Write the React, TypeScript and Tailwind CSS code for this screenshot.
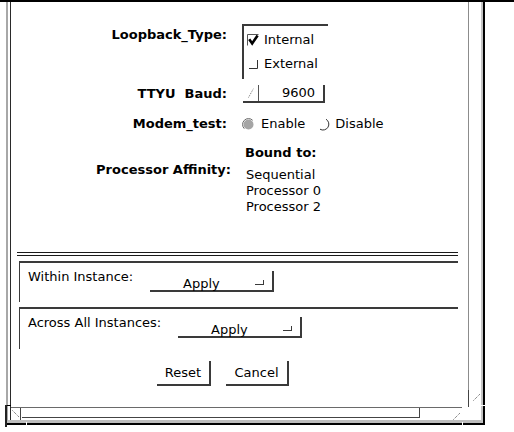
import React from "react";

// Motif style shadow colour
const line = "border-[#3a3a3a]";

function CheckOn() {
  return (
    <svg width="12" height="12" viewBox="0 0 12 12">
      <path d="M0.5 11.5V0.5H11.5" fill="none" stroke="#555" />
      <path d="M2.2 5.2l3 4.2 5.4-8" fill="none" stroke="#000" strokeWidth="2.6" />
    </svg>
  );
}

function CheckOff() {
  return (
    <svg width="12" height="12" viewBox="0 0 12 12">
      <path d="M2 10.5H10.5V2" fill="none" stroke="#333" />
    </svg>
  );
}

function RadioOn() {
  return (
    <svg width="13" height="13" viewBox="0 0 13 13">
      <circle cx="6.5" cy="6.5" r="5" fill="#a5a5a5" />
      <path d="M2.3 10.7A5.9 5.9 0 0 1 10.7 2.3" fill="none" stroke="#6a6a6a" />
    </svg>
  );
}

function RadioOff() {
  return (
    <svg width="13" height="13" viewBox="0 0 13 13">
      <path d="M8 1.2A5.5 5.5 0 0 1 2 11.2" fill="none" stroke="#333" />
    </svg>
  );
}

function Dots({ flip }: { flip?: boolean }) {
  // little dotted diagonal used by the scroll/resize corners
  return (
    <svg width="8" height="8" viewBox="0 0 8 8">
      <path
        d={flip ? "M0.5 0.5L7.5 7.5" : "M0.5 7.5L7.5 0.5"}
        stroke="#555"
        strokeDasharray="1 1"
        fill="none"
      />
    </svg>
  );
}

export default function App() {
  return (
    <div className="relative w-[514px] h-[432px] overflow-hidden bg-white border-t-2 border-black font-['DejaVu_Sans',sans-serif] text-[13px] leading-[16px] text-black">
      <div className="ml-[6px] w-[479px] h-[423px] border-r-2 border-b-2 border-black">
        <div className="h-full border-l-2 border-l-[#a8a8a8] border-r-2 border-r-[#c4c4c4] border-b-[3px] border-b-[#bdbdbd] pl-[2px]">
          <div className="h-full border-l border-[#2a2a2a] flex flex-col">
            <div className="flex flex-1 min-h-0">
              {/* form */}
              <div className="w-[457px] flex flex-col">
                <div className="mt-[22px] flex">
                  <div className="w-[216px] mt-[3px] text-right font-bold">Loopback_Type:</div>
                  <div className={`ml-[15px] w-[86px] h-[55px] border-t-2 border-l-2 ${line} pt-[6px] pl-[3px]`}>
                    <div className="flex items-center gap-[5px]">
                      <CheckOn />
                      <span>Internal</span>
                    </div>
                    <div className="mt-[8px] flex items-center gap-[5px]">
                      <CheckOff />
                      <span>External</span>
                    </div>
                  </div>
                </div>

                <div className="mt-[6px] flex items-center">
                  <div className="w-[216px] text-right font-bold whitespace-pre">TTYU  Baud:</div>
                  <div className={`ml-[16px] w-[82px] h-[18px] border-b-2 border-r-2 ${line} flex`}>
                    <div className="w-[16px] border-r border-[#555] flex items-center justify-center">
                      <svg width="6" height="10" viewBox="0 0 6 10">
                        <path d="M0.5 9.5L5.5 0.5" stroke="#777" strokeDasharray="1 1" fill="none" />
                      </svg>
                    </div>
                    <div className="flex-1 self-center text-right pr-[8px]">9600</div>
                  </div>
                </div>

                <div className="mt-[13px] flex items-center">
                  <div className="w-[216px] text-right font-bold">Modem_test:</div>
                  <div className="ml-[15px] flex items-center">
                    <RadioOn />
                    <span className="ml-[6px]">Enable</span>
                    <span className="ml-[13px] flex">
                      <RadioOff />
                    </span>
                    <span className="ml-[4px]">Disable</span>
                  </div>
                </div>

                <div className="mt-[13px] flex">
                  <div className="w-[220px] mt-[17px] text-right font-bold">Processor Affinity:</div>
                  <div className="ml-[14px] flex flex-col">
                    <div className="font-bold">Bound to:</div>
                    <div className="mt-[6px] ml-[1px] flex flex-col">
                      <span>Sequential</span>
                      <span>Processor 0</span>
                      <span>Processor 2</span>
                    </div>
                  </div>
                </div>

                <div className="mt-[37px] ml-[6px] w-[441px] h-[4px] border-y border-[#1a1a1a]" />

                <div className={`mt-[5px] ml-[8px] w-[439px] h-[41px] border-t-2 border-l ${line} pt-[6px] pl-[8px] flex items-start`}>
                  <div className="w-[122px]">Within Instance:</div>
                  <div className={`mt-[2px] w-[124px] h-[21px] border-b-2 border-r-2 ${line} flex items-start pt-[6px] leading-[14px]`}>
                    <span className="ml-[33px]">Apply</span>
                    <span className={`ml-auto mr-[8px] mt-[3px] w-[9px] h-[5px] border-b border-r ${line}`} />
                  </div>
                </div>

                <div className={`mt-[5px] ml-[8px] w-[439px] h-[42px] border-t-2 border-l ${line} pt-[6px] pl-[8px] flex items-start`}>
                  <div className="w-[150px]">Across All Instances:</div>
                  <div className={`mt-[2px] w-[124px] h-[21px] border-b-2 border-r-2 ${line} flex items-start pt-[6px] leading-[14px]`}>
                    <span className="ml-[33px]">Apply</span>
                    <span className={`ml-auto mr-[8px] mt-[3px] w-[9px] h-[5px] border-b border-r ${line}`} />
                  </div>
                </div>

                <div className="mt-[12px] ml-[146px] flex gap-[15px]">
                  <button className={`w-[54px] h-[25px] border-b-2 border-r-2 ${line} flex items-center justify-center`}>
                    Reset
                  </button>
                  <button className={`w-[63px] h-[25px] border-b-2 border-r-2 ${line} flex items-center justify-center`}>
                    Cancel
                  </button>
                </div>
              </div>

              {/* vertical scroll gutter */}
              <div className="flex-1 flex flex-col">
                <div className="flex-1 border-l border-[#8c8c8c]" />
                <div className="h-[17px] border-l border-[#444] pl-[4px] pt-[3px]">
                  <Dots />
                </div>
              </div>
            </div>

            {/* horizontal scroll bar */}
            <div className="h-[13px] flex">
              <div className="w-[451px] border-t border-[#6a6a6a] flex">
                <div className="w-[10px] border-r border-[#444] pl-[1px] pt-[2px]">
                  <Dots flip />
                </div>
                <div className="ml-[1px] w-[398px] h-[10px] border-b border-r border-[#444]" />
                <div className="ml-auto mr-[1px] pt-[4px] flex">
                  <Dots />
                </div>
              </div>
              <div className="flex-1" />
            </div>
          </div>
        </div>
      </div>

      {/* resize corner ticks over the window frame */}
      <div className="absolute left-[5px] top-[403px] w-[6px] h-[1px] bg-black" />
      <div className="absolute left-[5px] top-[403px] w-[2px] h-[22px] bg-[#222]" />
      <div className="absolute left-[26px] top-[420px] w-[1px] h-[5px] bg-white" />
      <div className="absolute left-[462px] top-[420px] w-[1px] h-[5px] bg-white" />
      <div className="absolute left-[480px] top-[403px] w-[5px] h-[1px] bg-white" />
    </div>
  );
}
